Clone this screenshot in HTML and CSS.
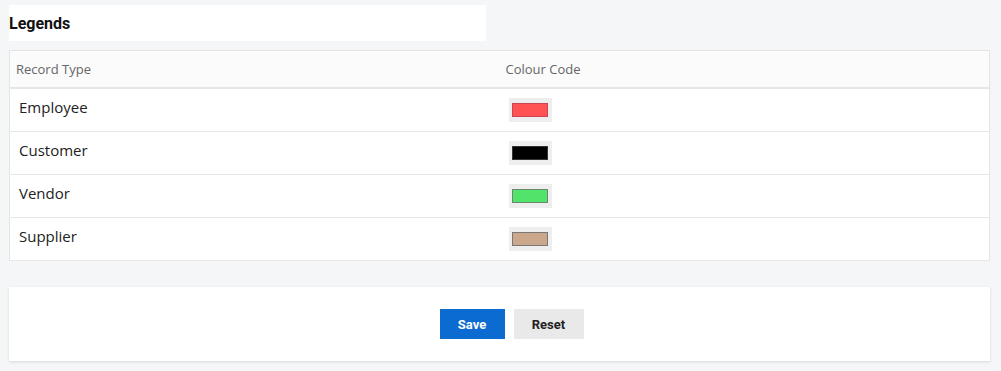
FILE: index.html
```html
<!DOCTYPE html>
<html lang="en">
<head>
    <meta charset="UTF-8">
    <meta name="viewport" content="width=device-width, initial-scale=1.0">
    <title>Legends</title>
    <link rel="stylesheet" href="styles.css">
</head>
<body>
    <div class="page">
        <div class="title-box">
            <h2>Legends</h2>
        </div>

        <table class="legend-table">
            <thead>
                <tr>
                    <th>Record Type</th>
                    <th>Colour Code</th>
                </tr>
            </thead>
            <tbody>
                <tr>
                    <td>Employee</td>
                    <td><span class="swatch"><span class="swatch__color swatch--red"></span></span></td>
                </tr>
                <tr>
                    <td>Customer</td>
                    <td><span class="swatch"><span class="swatch__color swatch--black"></span></span></td>
                </tr>
                <tr>
                    <td>Vendor</td>
                    <td><span class="swatch"><span class="swatch__color swatch--green"></span></span></td>
                </tr>
                <tr>
                    <td>Supplier</td>
                    <td><span class="swatch"><span class="swatch__color swatch--tan"></span></span></td>
                </tr>
            </tbody>
        </table>

        <div class="actions">
            <button class="btn btn--primary">Save</button>
            <button class="btn btn--light">Reset</button>
        </div>
    </div>
</body>
</html>
```

FILE: styles.css
```css
body {
    margin: 0;
    background: #f5f6f8;
    font-family: "Open Sans", Arial, sans-serif;
    color: #222;
}

.page { padding: 5px 11px 10px 9px; }

.title-box {
    width: 477px;
    height: 36px;
    background: #fff;
    display: flex;
    align-items: center;
}
.title-box h2 {
    margin: 0;
    font-family: Roboto, Arial, sans-serif;
    font-size: 16px;
    font-weight: 700;
    color: #111;
}

/* Table */
.legend-table {
    width: 100%;
    margin-top: 9px;
    border-collapse: collapse;
    background: #fff;
    border: 1px solid #e4e4e4;
    table-layout: fixed;
}
.legend-table th {
    height: 36px;
    padding: 0 6px;
    text-align: left;
    font-weight: 400;
    font-size: 13px;
    color: #666;
    background: #fbfbfb;
    border-bottom: 2px solid #e6e6e6;
}
.legend-table td {
    height: 42px;
    padding: 0 9px;
    font-size: 15px;
    color: #222;
    border-bottom: 1px solid #e8e8e8;
    vertical-align: middle;
}
.legend-table td:first-child {
    height: 36px;
    padding: 0 9px 6px;
}

.swatch {
    display: inline-flex;
    align-items: center;
    justify-content: center;
    width: 43px;
    height: 24px;
    background: #eee;
    vertical-align: middle;
}
.swatch__color {
    width: 34px;
    height: 12px;
    border: 1px solid #777;
}
.swatch--red { background: #ff5252; border-color: #c45; }
.swatch--black { background: #000; border-color: #333; }
.swatch--green { background: #52e36b; border-color: #6a8a70; }
.swatch--tan { background: #cba88c; border-color: #777; }

/* Actions */
.actions {
    margin-top: 26px;
    height: 74px;
    padding-left: 24px;
    background: #fff;
    box-shadow: 0 1px 3px rgba(0,0,0,0.12);
    display: flex;
    align-items: center;
    justify-content: center;
    gap: 9px;
}
.btn {
    height: 30px;
    border: none;
    font-family: Roboto, Arial, sans-serif;
    font-size: 13px;
    font-weight: 700;
    cursor: pointer;
}
.btn--primary { width: 65px; background: #0b6bd0; color: #fff; }
.btn--light { width: 70px; background: #e9e9e9; color: #222; }
```
